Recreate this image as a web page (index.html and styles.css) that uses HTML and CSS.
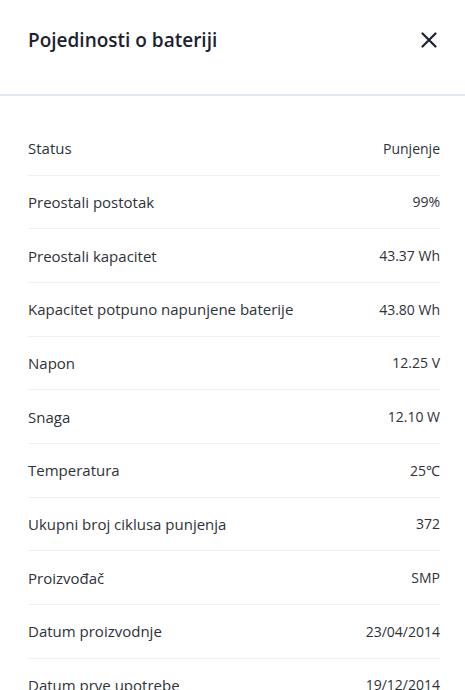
FILE: index.html
```html
<!DOCTYPE html>
<html>
<head>
    <meta charset="utf-8">
    <title>Pojedinosti o bateriji</title>
    <meta name="viewport" content="width=device-width, initial-scale=1.0">
    <link rel="stylesheet" href="styles.css">
</head>
<body>
    <div class="panel">
        <div class="header">
            <div class="title">Pojedinosti o bateriji</div>
            <button class="close" aria-label="Zatvori">
                <svg width="16" height="16" viewBox="0 0 16 16">
                    <path d="M1.5 1.5 L14.5 14.5 M14.5 1.5 L1.5 14.5" stroke="#1c2230" stroke-width="2.2" stroke-linecap="round"/>
                </svg>
            </button>
        </div>
        <div class="list">
            <div class="row"><span class="label">Status</span><span class="value">Punjenje</span></div>
            <div class="row"><span class="label">Preostali postotak</span><span class="value">99%</span></div>
            <div class="row"><span class="label">Preostali kapacitet</span><span class="value">43.37 Wh</span></div>
            <div class="row"><span class="label">Kapacitet potpuno napunjene baterije</span><span class="value">43.80 Wh</span></div>
            <div class="row"><span class="label">Napon</span><span class="value">12.25 V</span></div>
            <div class="row"><span class="label">Snaga</span><span class="value">12.10 W</span></div>
            <div class="row"><span class="label">Temperatura</span><span class="value">25℃</span></div>
            <div class="row"><span class="label">Ukupni broj ciklusa punjenja</span><span class="value">372</span></div>
            <div class="row"><span class="label">Proizvođač</span><span class="value">SMP</span></div>
            <div class="row"><span class="label">Datum proizvodnje</span><span class="value">23/04/2014</span></div>
            <div class="row"><span class="label">Datum prve upotrebe</span><span class="value">19/12/2014</span></div>
        </div>
    </div>
</body>
</html>
```

FILE: styles.css
```css
* {
    box-sizing: border-box;
}

body {
    margin: 0;
    background-color: #ffffff;
    font-family: 'Open Sans', 'Noto Sans', sans-serif;
    color: #2e3238;
    overflow: hidden;
}

.header {
    display: flex;
    align-items: center;
    justify-content: space-between;
    height: 96px;
    padding: 0 24px 14px 28px;
    border-bottom: 2px solid #e2e8f0;
}

.title {
    font-size: 19px;
    font-weight: 600;
    color: #1c2230;
    line-height: 28px;
}

.close {
    display: flex;
    align-items: center;
    justify-content: center;
    width: 24px;
    height: 24px;
    padding: 0;
    border: none;
    background: none;
}

.list {
    padding: 26px 25px 0 28px;
}

.row {
    display: flex;
    align-items: center;
    justify-content: space-between;
    height: 53.67px;
    border-bottom: 1px solid #eef0f3;
}

.label {
    font-size: 15px;
    color: #2e3238;
}

.value {
    font-size: 14px;
    color: #2e3238;
}
```
